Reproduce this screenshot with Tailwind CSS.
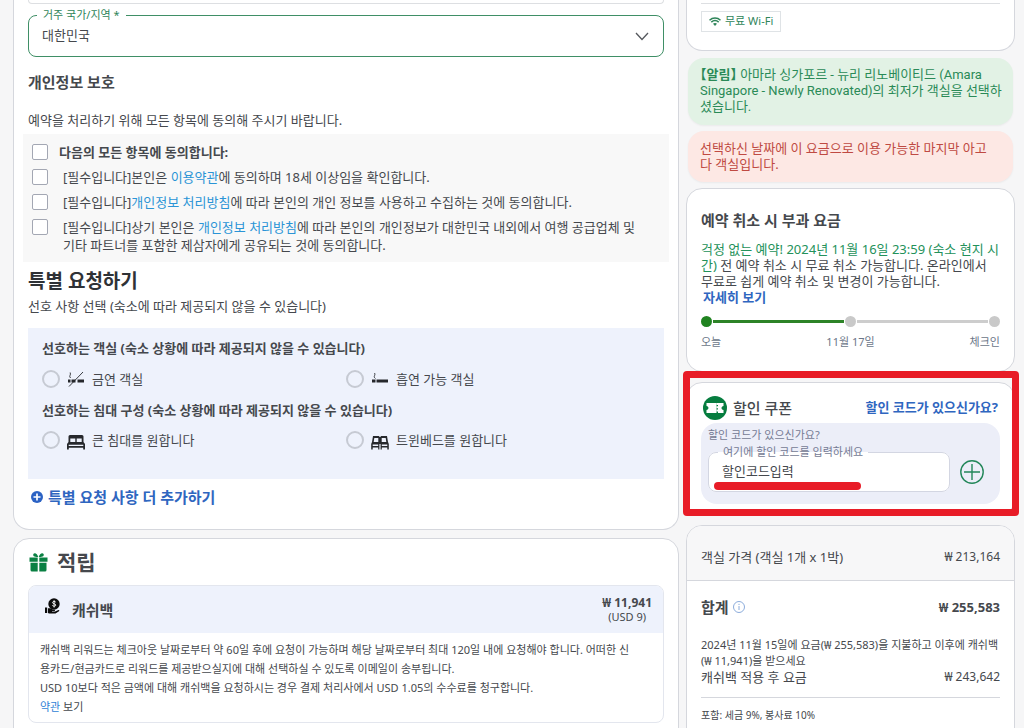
<!DOCTYPE html>
<html lang="ko">
<head>
<meta charset="utf-8">
<meta name="viewport" content="width=device-width, initial-scale=1">
<title>예약 정보 입력</title>
<script src="https://cdn.jsdelivr.net/npm/@tailwindcss/browser@4"></script>
</head>
<body class="h-screen overflow-hidden bg-[#f6f6f7] font-['Noto_Sans','Noto_Sans_CJK_KR',sans-serif] text-[13px] text-[#45484d]">
<div class="flex items-start gap-[7px] pl-[13px] pr-[9px]">

  <main class="min-w-0 flex-1">
    <section class="rounded-b-2xl border border-t-0 border-[#d5d7dd] bg-white px-[14px] pb-5">
      <div class="h-1 rounded-b-lg border border-t-0 border-[#dddfe2]"></div>
      <fieldset class="relative mt-[3px] rounded-lg border border-[#3f8f66] pb-[7px]">
        <legend class="ml-2 px-[6px] text-[11px] leading-4 text-[#2f855a]"><label for="country">거주 국가/지역 *</label></legend>
        <select id="country" class="block h-[26px] w-full appearance-none bg-transparent px-[13px] text-[13px] outline-none">
          <option>대한민국</option>
        </select>
        <svg class="pointer-events-none absolute right-[14px] top-[9px]" width="14" height="9" viewBox="0 0 14 9" fill="none" stroke="#55585d" stroke-width="1.3"><path d="M1 1l6 6.5L13 1"/></svg>
      </fieldset>

      <h2 class="mt-[15px] text-[15px] font-bold leading-5">개인정보 보호</h2>
      <p class="mt-[18px] leading-5">예약을 처리하기 위해 모든 항목에 동의해 주시기 바랍니다.</p>

      <div class="-mx-[5px] mt-1 flex flex-col gap-[7px] bg-[#f8f8f8] pb-2 pl-[9px] pr-3 pt-[9px] leading-[18px]">
        <label class="flex items-start gap-[11px] font-bold"><input type="checkbox" class="mt-px size-4 shrink-0 appearance-none rounded-xs border border-[#a3a7b3] bg-white"><span>다음의 모든 항목에 동의합니다:</span></label>
        <div class="flex items-start gap-[15px]"><input id="c1" type="checkbox" class="mt-px size-4 shrink-0 appearance-none rounded-xs border border-[#a3a7b3] bg-white"><label for="c1">[필수입니다]본인은 <a href="#" class="text-[#2a94d6]">이용약관</a>에 동의하며 18세 이상임을 확인합니다.</label></div>
        <div class="flex items-start gap-[15px]"><input id="c2" type="checkbox" class="mt-px size-4 shrink-0 appearance-none rounded-xs border border-[#a3a7b3] bg-white"><label for="c2">[필수입니다]<a href="#" class="text-[#2a94d6]">개인정보 처리방침</a>에 따라 본인의 개인 정보를 사용하고 수집하는 것에 동의합니다.</label></div>
        <div class="flex items-start gap-[15px]"><input id="c3" type="checkbox" class="mt-px size-4 shrink-0 appearance-none rounded-xs border border-[#a3a7b3] bg-white"><label for="c3">[필수입니다]상기 본인은 <a href="#" class="text-[#2a94d6]">개인정보 처리방침</a>에 따라 본인의 개인정보가 대한민국 내외에서 여행 공급업체 및<br>기타 파트너를 포함한 제삼자에게 공유되는 것에 동의합니다.</label></div>
      </div>

      <h2 class="mt-[7px] text-[19px] font-bold leading-6 text-[#2f3236]">특별 요청하기</h2>
      <p class="mt-[3px] leading-5">선호 사항 선택 (숙소에 따라 제공되지 않을 수 있습니다)</p>

      <div class="mt-3 bg-[#eef2fc] px-[14px] pb-[29px] pt-[10px] leading-5">
        <h3 class="font-bold" id="roomPref">선호하는 객실 (숙소 상황에 따라 제공되지 않을 수 있습니다)</h3>
        <div class="mt-[11px] grid grid-cols-2" role="radiogroup" aria-labelledby="roomPref">
          <label class="flex items-center gap-2"><input type="radio" name="room" class="size-[18px] appearance-none rounded-full border-2 border-[#c6cad3]">
            <svg width="16" height="16" viewBox="0 0 16 16" fill="#26282c"><path d="M0 8.5h2.5v3H0zM3.5 8.5h4v3h-4zM9.500 8.500h6.500v3H9.500z"/><path d="M2.500 7c-2-2 .8-3-.3-5.500M1 15.500L15 1" fill="none" stroke="#26282c" stroke-width=".9"/></svg>
            <span>금연 객실</span></label>
          <label class="flex items-center gap-2"><input type="radio" name="room" class="size-[18px] appearance-none rounded-full border-2 border-[#c6cad3]">
            <svg width="16" height="16" viewBox="0 0 16 16" fill="#26282c"><path d="M0 8.500h3.500v3H0zM4.500 8.500H16v3H4.500z"/><path d="M3.500 7.500c-3-2 .5-3-1-5.500" fill="none" stroke="#26282c" stroke-width=".9"/></svg>
            <span>흡연 가능 객실</span></label>
        </div>
        <h3 class="mt-[11px] font-bold" id="bedPref">선호하는 침대 구성 (숙소 상황에 따라 제공되지 않을 수 있습니다)</h3>
        <div class="mt-[10px] grid grid-cols-2" role="radiogroup" aria-labelledby="bedPref">
          <label class="flex items-center gap-[7px]"><input type="radio" name="bed" class="size-[18px] appearance-none rounded-full border-2 border-[#c6cad3]">
            <svg class="mt-1" width="18" height="16" viewBox="0 0 18 16" fill="#26282c"><path fill-rule="evenodd" d="M3 1h12a1.500 1.500 0 0 1 1.500 1.500V8L18 10v5.500h-1.800v-1.800H1.800v1.800H0V10l1.500-2V2.500A1.500 1.500 0 0 1 3 1zM3.300 4.500V8h5V4.500zM9.700 4.500V8h5V4.500zM1.700 10.800v1.200h14.600v-1.200z"/></svg>
            <span>큰 침대를 원합니다</span></label>
          <label class="flex items-center gap-[7px]"><input type="radio" name="bed" class="size-[18px] appearance-none rounded-full border-2 border-[#c6cad3]">
            <svg class="mt-1" width="18" height="16" viewBox="0 0 18 16" fill="#26282c"><path fill-rule="evenodd" d="M2 2h6l.6 1h.8L10 2h6l1 6 .8 2v5.500h-1.500v-2h-5.500v2H9.600V10H8.400v5.500H7.200v-2H1.700v2H.2V10L1 8zM3.300 4l-.6 4h4.600V4zM10.700 4v4h4.600l-.6-4zM1.700 10.500V12h5.500v-1.500zM10.800 10.500V12h5.500v-1.500z"/></svg>
            <span>트윈베드를 원합니다</span></label>
        </div>
      </div>

      <button type="button" class="mt-[6px] flex items-center gap-[5px] pl-[3px] text-[15px] font-bold leading-6 text-[#2f66c0]">
        <svg width="12" height="12" viewBox="0 0 12 12"><circle cx="6" cy="6" r="6" fill="#2b62c4"/><path d="M6 2.500v7M2.500 6h7" stroke="#fff" stroke-width="1.700"/></svg>
        특별 요청 사항 더 추가하기
      </button>
    </section>

    <section class="mt-2 rounded-2xl border border-[#d5d7dd] bg-white px-[14px] pb-5 pt-[7px]">
      <h2 class="flex items-center gap-[9px] pl-px text-[21px] font-bold leading-8">
        <svg width="19" height="20" viewBox="0 0 19 20" fill="#0a8043"><path d="M.5 5.500h8.200v4.200H.5zM10.300 5.500h8.200v4.200h-8.200zM1.500 10.700h7.200v8.800H3a1.500 1.500 0 0 1-1.500-1.500zM10.300 10.700h7.200V18a1.500 1.500 0 0 1-1.500 1.500h-5.700z"/><path d="M9 5C4.500 5 4 3.700 4.300 2.300 5 .2 8.500 1 9.200 5zM10 5c4.500 0 5-1.300 4.700-2.700C14 .2 10.500 1 9.800 5z"/></svg>
        적립
      </h2>
      <div class="mt-[7px] overflow-hidden rounded-lg border border-[#e3e6ee]">
        <div class="flex h-[47px] items-center justify-between bg-[#eef2fc] pl-4 pr-[11px]">
          <div class="flex items-center gap-3">
            <svg class="mb-2" width="15" height="16" viewBox="0 0 15 16"><circle cx="9" cy="6" r="5.700" fill="#0b0b0b"/><path d="M10.800 4.200c-.5-1-3.300-1-3.300.4 0 1.600 3.300.8 3.300 2.500 0 1.400-2.900 1.400-3.500.3M9.100 2.200v7.300" fill="none" stroke="#fff" stroke-width=".9"/><path d="M0 9.500h2.200V15H0zM3 10.300h2c1.500 0 2 1.500 3.800 1.500h.8c.7 0 .7 1-.1 1.200H7v.6h3l3.500-1.500c.8-.2 1.200.7.500 1.200L10.500 15.500H4L3 15z" fill="#0b0b0b"/></svg>
            <h3 class="text-[15px] font-bold leading-5">캐쉬백</h3>
          </div>
          <div class="text-center leading-[14px]">
            <div class="text-[12px] font-bold">₩ 11,941</div>
            <div class="text-[11px]">(USD 9)</div>
          </div>
        </div>
        <div class="px-[11px] pb-[6px] pt-[7px] text-[11px] leading-[19px]">
          <p>캐쉬백 리워드는 체크아웃 날짜로부터 약 60일 후에 요청이 가능하며 해당 날짜로부터 최대 120일 내에 요청해야 합니다. 어떠한 신<br>용카드/현금카드로 리워드를 제공받으실지에 대해 선택하실 수 있도록 이메일이 송부됩니다.</p>
          <p>USD 10보다 적은 금액에 대해 캐쉬백을 요청하시는 경우 결제 처리사에서 USD 1.05의 수수료를 청구합니다.</p>
          <p><a href="#" class="text-[#2f7fd6]">약관</a> 보기</p>
        </div>
      </div>
    </section>
  </main>

  <aside class="w-[329px] shrink-0">
    <section class="rounded-b-2xl border border-t-0 border-[#d5d7dd] bg-white px-[14px] pb-[18px] pt-[3px]">
      <div class="border-t border-[#dddfe2]"></div>
      <div class="mt-[7px] inline-flex h-[21px] items-center gap-1 border border-[#dfe3e6] px-[7px] align-top text-[11px] text-[#2f855a]">
        <svg width="12" height="9" viewBox="0 0 12 9" fill="none" stroke="#2f855a" stroke-width="1.500"><path d="M.5 3.200c3.200-3 7.800-3 11 0M2.300 5.100c2.200-2 5.200-2 7.400 0"/><path d="M4 6.800c1.200-1 2.800-1 4 0L6 9z" fill="#2f855a" stroke="none"/></svg>
        무료 Wi-Fi
      </div>
    </section>

    <p class="mx-[2px] mt-[7px] rounded-2xl bg-[#e2f2e5] pb-[10px] pl-3 pr-1 pt-[9px] font-[Roboto,'Noto_Sans_CJK_KR',sans-serif] leading-4 text-[#2a8a57] shadow-xs"><b class="[font-feature-settings:'halt']">【알림】</b> 아마라 싱가포르 - 뉴리 리노베이티드 (Amara<br>Singapore - Newly Renovated)의 최저가 객실을 선택하<br>셨습니다.</p>
    <p class="mx-[2px] mt-[6px] rounded-2xl bg-[#fde8e4] px-3 pb-[10px] pt-[9px] leading-4 text-[#bf4a42] shadow-xs">선택하신 날짜에 이 요금으로 이용 가능한 마지막 아고<br>다 객실입니다.</p>

    <section class="mt-[6px] rounded-2xl border border-[#d5d7dd] bg-white px-[14px] pb-[21px] pt-[21px]">
      <h2 class="text-[15px] font-bold leading-5">예약 취소 시 부과 요금</h2>
      <p class="mt-[11px] leading-4"><span class="text-[#23915a]">걱정 없는 예약! 2024년 11월 16일 23:59 (숙소 현지 시<br>간)</span> 전 예약 취소 시 무료 취소 가능합니다. 온라인에서<br>무료로 쉽게 예약 취소 및 변경이 가능합니다.<br><a href="#" class="ml-[2px] font-bold text-[#2f66c0]">자세히 보기</a></p>
      <div class="mt-[11px] flex items-center">
        <span class="size-[11px] rounded-full bg-[#208320]"></span><span class="mx-px h-[3px] flex-1 bg-[#2d8327]"></span>
        <span class="size-[11px] rounded-full bg-[#c9c9c9]"></span><span class="mx-px h-[3px] flex-1 bg-[#cdcdcd]"></span>
        <span class="size-[11px] rounded-full bg-[#c9c9c9]"></span>
      </div>
      <div class="mt-[7px] grid grid-cols-3 text-[11px] leading-4 text-[#6b7688]"><span>오늘</span><span class="text-center">11월 17일</span><span class="text-right">체크인</span></div>
    </section>

    <section class="relative mt-[10px] rounded-2xl border border-[#d5d7dd] bg-white px-[14px] pb-[11px] pt-[13px]">
      <div class="pointer-events-none absolute -bottom-px -left-1 -right-[5px] -top-3 z-10 rounded border-[7px] border-[#e81c27]"></div>
      <div class="flex items-center gap-[6px] pl-[2px] pr-[2px]">
        <svg width="24" height="24" viewBox="0 0 24 24"><circle cx="12" cy="12" r="12" fill="#067d3f"/><path d="M3.500 7h10v10h-10v-3c2.600-.6 2.600-3.400 0-4zM15 7h5.500v3c-2.600.6-2.600 3.400 0 4v3H15z" fill="#fff"/><path d="M14.200 7v10" stroke="#fff" stroke-width="1.600" stroke-dasharray="2 1.300"/></svg>
        <h2 class="flex-1 text-[15px] font-medium leading-6">할인 쿠폰</h2>
        <a href="#" class="text-[13px] font-bold text-[#2f66c0]">할인 코드가 있으신가요?</a>
      </div>
      <div class="mt-[3px] rounded-2xl bg-[#eceef8] px-[7px] pb-3 pt-1 text-[11px] text-[#757b94]">
        <p class="leading-4">할인 코드가 있으신가요?</p>
        <div class="mt-px flex items-end gap-[10px]">
          <fieldset class="relative min-w-0 flex-1 rounded-lg border border-[#d3d6e2] bg-white pb-[7px]">
            <legend class="ml-[9px] px-[5px] leading-4"><label for="coupon">여기에 할인 코드를 입력하세요</label></legend>
            <input id="coupon" type="text" value="할인코드입력" class="block h-6 w-full bg-transparent px-[13px] pb-1 text-[13px] text-[#45484d] outline-none">
            <div class="absolute bottom-[1px] left-[5px] h-2 w-[147px] rounded-full bg-[#e81c27]"></div>
          </fieldset>
          <button type="button" aria-label="쿠폰 추가" class="mb-2 mr-[9px]"><svg width="24" height="24" viewBox="0 0 24 24" fill="none" stroke="#23875a" stroke-width="1.400"><circle cx="12" cy="12" r="11.200"/><path d="M12 4v16M4 12h16"/></svg></button>
        </div>
      </div>
    </section>

    <section class="mt-[9px] overflow-hidden rounded-2xl border border-[#d5d7dd] bg-white">
      <div class="flex items-center justify-between border-b border-[#d5d7dd] bg-[#f7f7f8] px-[14px] pb-[13px] pt-[21px] leading-5"><span>객실 가격 (객실 1개 x 1박)</span><span class="text-[12px]">₩ 213,164</span></div>
      <div class="px-[14px] pb-6 pt-4">
        <div class="flex items-center justify-between font-bold leading-5">
          <span class="flex items-center gap-1 text-[15px]">합계 <svg width="12" height="12" viewBox="0 0 12 12" fill="none" stroke="#8cacdb"><circle cx="6" cy="6" r="5.500"/><path d="M6 5v4M6 2.800v1.200"/></svg></span>
          <span>₩ 255,583</span>
        </div>
        <p class="mt-5 text-[11px] leading-4">2024년 11월 15일에 요금(₩ 255,583)을 지불하고 이후에 캐쉬백<br>(₩ 11,941)을 받으세요</p>
        <div class="flex items-center justify-between leading-4"><span>캐쉬백 적용 후 요금</span><span class="text-[12px]">₩ 243,642</span></div>
        <p class="mt-3 border-t border-[#d5d7dd] pt-[9px] text-[10px] leading-4">포함: 세금 9%, 봉사료 10%</p>
      </div>
    </section>
  </aside>
</div>
</body>
</html>
